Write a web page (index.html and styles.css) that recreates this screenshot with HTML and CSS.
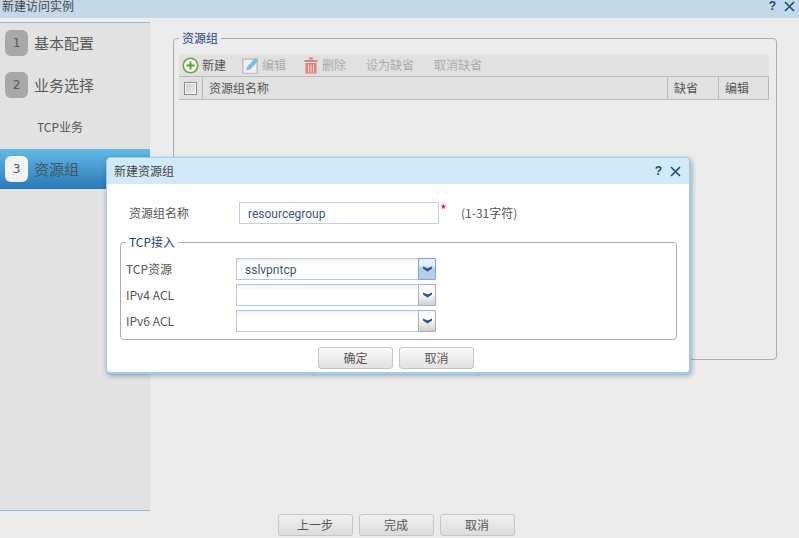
FILE: index.html
```html
<!DOCTYPE html>
<html lang="zh">
<head>
<meta charset="utf-8">
<title>新建访问实例</title>
<link rel="stylesheet" href="styles.css">
</head>
<body>
<div class="titlebar">
  <span class="title-text">新建访问实例</span>
  <span class="tools">
    <span class="help">?</span>
    <svg class="close" width="11" height="11" viewBox="0 0 11 11"><path d="M1 1l9 9M10 1l-9 9"/></svg>
  </span>
</div>
<div class="main">
  <nav class="sidebar">
    <div class="step"><span class="badge">1</span><span>基本配置</span></div>
    <div class="step"><span class="badge">2</span><span>业务选择</span></div>
    <div class="step sub">TCP业务</div>
    <div class="step active"><span class="badge">3</span><span>资源组</span></div>
  </nav>
  <section class="content">
    <fieldset class="group outer">
      <legend>资源组</legend>
      <div class="toolbar">
        <span class="tool on">
          <svg width="17" height="17" viewBox="0 0 17 17"><circle cx="8.500" cy="8.500" r="7.300" fill="#f4f7f0" stroke="#6fa544" stroke-width="1.600"/><path d="M8.500 4.500v8M4.500 8.500h8" stroke="#5f9c38" stroke-width="2" fill="none"/></svg>
          新建
        </span>
        <span class="tool">
          <svg width="17" height="17" viewBox="0 0 17 17"><rect x="0.750" y="2" width="14.500" height="14.500" fill="#f0f0f0" stroke="#bdbdbd" stroke-width="1.500"/><path d="M4 13.500l1-3.500L13 1l3 3-8 8.500z" fill="#7dbce6"/></svg>
          编辑
        </span>
        <span class="tool trash">
          <svg width="14" height="17" viewBox="0 0 14 17"><path d="M0.500 3h13v2h-13zM5 0.500h4v2h-4z" fill="#e08080"/><path d="M1.500 6h11v10.500h-11z" fill="#e08080"/><path d="M4.500 7.500v8M7 7.500v8M9.500 7.500v8" stroke="#f6dada" stroke-width="1"/></svg>
          删除
        </span>
        <span class="tool wide">设为缺省</span>
        <span class="tool wide">取消缺省</span>
      </div>
      <div class="thead">
        <span class="cell check"><span class="checkbox"></span></span>
        <span class="cell">资源组名称</span>
        <span class="cell">缺省</span>
        <span class="cell">编辑</span>
      </div>
    </fieldset>
  </section>
</div>
<div class="footer">
  <button class="btn">上一步</button>
  <button class="btn">完成</button>
  <button class="btn">取消</button>
</div>

<div class="dialog">
  <div class="dialog-head">
    <span>新建资源组</span>
    <span class="tools">
      <span class="help">?</span>
      <svg class="close" width="11" height="11" viewBox="0 0 11 11"><path d="M1 1l9 9M10 1l-9 9"/></svg>
    </span>
  </div>
  <div class="dialog-body">
    <div class="name-row">
      <label class="name-label">资源组名称</label>
      <div class="input">resourcegroup</div>
      <span class="star">*</span>
      <span class="hint">(1-31字符)</span>
    </div>
    <fieldset class="group inner">
      <legend>TCP接入</legend>
      <div class="sel-row">
        <label>TCP资源</label>
        <div class="select focus"><span class="value">sslvpntcp</span><span class="arrow"><svg width="9" height="6" viewBox="0 0 9 6"><path d="M0 0.500L4.500 2.500 9 0.500V2.500L4.500 5.500 0 2.500z"/></svg></span></div>
      </div>
      <div class="sel-row">
        <label>IPv4 ACL</label>
        <div class="select"><span class="value"></span><span class="arrow"><svg width="9" height="6" viewBox="0 0 9 6"><path d="M0 0.500L4.500 2.500 9 0.500V2.500L4.500 5.500 0 2.500z"/></svg></span></div>
      </div>
      <div class="sel-row">
        <label>IPv6 ACL</label>
        <div class="select"><span class="value"></span><span class="arrow"><svg width="9" height="6" viewBox="0 0 9 6"><path d="M0 0.500L4.500 2.500 9 0.500V2.500L4.500 5.500 0 2.500z"/></svg></span></div>
      </div>
    </fieldset>
    <div class="dialog-actions">
      <button class="btn light">确定</button>
      <button class="btn light">取消</button>
    </div>
  </div>
</div>
</body>
</html>
```
FILE: styles.css
```css
* { box-sizing: border-box; }
html, body { height: 100%; }
body {
  margin: 0;
  width: 799px;
  height: 538px;
  overflow: hidden;
  position: relative;
  background: #ececec;
  color: #555;
  font: 12px/16px "Noto Sans CJK SC", "Noto Sans", sans-serif;
  display: flex;
  flex-direction: column;
}
.titlebar {
  height: 18px;
  flex: none;
  background: #c3d9e8;
  display: flex;
  align-items: center;
  justify-content: space-between;
  padding: 0 4px 0 2px;
  overflow: hidden;
  color: #444;
}
.title-text { margin-top: -7px; }
.tools { display: flex; align-items: center; gap: 8px; }
.titlebar .tools { margin-top: -6px; }
.help { font: bold 12px/12px "Liberation Sans", sans-serif; color: #1c4a78; }
.close { display: block; }
.close path { stroke: #1c4a78; stroke-width: 1.6; fill: none; }
.main {
  height: 489px;
  flex: none;
  margin-top: 4px;
  display: flex;
}
.sidebar {
  width: 150px;
  flex: none;
  background: #e2e2e2;
  border-top: 1px solid #8fb4e2;
  border-bottom: 1px solid #8fb4e2;
  display: flex;
  flex-direction: column;
  gap: 2px;
}
.step {
  height: 40px;
  display: flex;
  align-items: center;
  gap: 6px;
  padding-left: 5px;
  font-size: 15px;
  color: #5a5a5a;
}
.step.sub { padding-left: 37px; font-size: 12px; color: #555; }
.badge {
  width: 23px;
  height: 26px;
  border-radius: 6px;
  background: #a8a8a8;
  display: flex;
  align-items: center;
  justify-content: center;
  font: 12px "DejaVu Sans", sans-serif;
  color: #555;
}
.step.active { background: linear-gradient(#62bae6, #2b78b5); color: #3f5568; }
.step.active .badge { background: #f2f2f2; }
.content { flex: 1; padding: 8px 22px 0 23px; }
.group {
  margin: 0;
  border: 1px solid #aaaabf;
  border-radius: 4px;
  min-width: 0;
}
.group legend { padding: 0 3px; color: #24467c; line-height: 16px; }
.outer { height: 330px; padding: 8px 7px 0 5px; }
.toolbar {
  height: 22px;
  background: #e1e1e1;
  display: flex;
  align-items: center;
  padding-left: 3px;
}
.tool {
  display: flex;
  align-items: center;
  gap: 3px;
  margin-right: 16px;
  color: #aaa;
  white-space: nowrap;
}
.tool.on { color: #555; }
.tool.trash { margin-left: 2px; margin-right: 20px; gap: 4px; }
.tool.wide { margin-right: 20px; }
.thead {
  height: 24px;
  display: grid;
  grid-template-columns: 23px 465px 51px 50px;
  background: #e1e1e1;
  border-top: 1px solid #b8b8b8;
  border-bottom: 1px solid #b8b8b8;
  border-right: 1px solid #b8b8b8;
}
.cell {
  display: flex;
  align-items: center;
  padding-left: 6px;
  border-left: 1px solid #b8b8b8;
  color: #555;
}
.cell:first-child { border-left: 0; }
.cell.check { padding-left: 5px; }
.checkbox {
  width: 13px;
  height: 13px;
  border: 1px solid #8a8a8a;
  background: linear-gradient(135deg, #c8c8c8, #f2f2f2);
  box-shadow: inset 0 0 0 1px #f6f6f6;
}
.footer {
  margin-top: 3px;
  display: flex;
  justify-content: center;
  gap: 6px;
  padding-right: 7px;
}
.btn {
  width: 75px;
  height: 22px;
  padding: 0;
  border: 1px solid #c4c4c4;
  border-radius: 3px;
  background: linear-gradient(#f0f0f0, #dcdcdc);
  font: inherit;
  color: #555;
}
.btn.light { background: linear-gradient(#fafafa, #e2e2e2); }
.dialog {
  position: absolute;
  left: 106px;
  top: 157px;
  width: 585px;
  height: 217px;
  background: #fff;
  border: 1px solid #9ccdf0;
  border-right-width: 2px;
  border-bottom-width: 2px;
  border-radius: 5px;
  box-shadow: 1px 2px 5px rgba(0, 0, 0, .3);
  overflow: hidden;
}
.dialog-head {
  height: 26px;
  background: #d2e9fa;
  display: flex;
  align-items: center;
  justify-content: space-between;
  padding: 0 8px 0 7px;
  color: #444;
}
.dialog-body { padding: 18px 12px 0 13px; }
.name-row { height: 22px; display: flex; align-items: center; }
.name-label { width: 119px; padding-left: 9px; }
.input {
  width: 200px;
  height: 22px;
  border: 1px solid #c2d2e6;
  padding-left: 8px;
  font-family: Roboto, sans-serif;
  line-height: 22px;
  color: #3d5472;
}
.star { color: #e8201c; align-self: flex-start; margin-left: 1px; width: 21px; font-size: 15px; line-height: 16px; }
.inner { height: 106px; padding: 8px 0 0 5px; margin-top: 10px; }
.sel-row { display: flex; align-items: center; height: 22px; margin-bottom: 4px; }
.sel-row label { width: 110px; }
.select {
  width: 200px;
  height: 22px;
  display: flex;
  border: 1px solid #b6c8de;
  border-right: 0;
  background: linear-gradient(#f1f1f1, #fff 6px);
}
.value { flex: 1; padding-left: 8px; font-family: Roboto, sans-serif; line-height: 22px; color: #3d5472; }
.arrow {
  width: 18px;
  margin-top: -1px;
  margin-bottom: -1px;
  display: flex;
  justify-content: center;
  padding-top: 7px;
  border: 1px solid #a9b0bf;
  border-radius: 0 2px 2px 0;
  background: linear-gradient(#fafafa 45%, #cfcfcf);
}
.arrow svg { display: block; }
.arrow path { fill: #2f4f8c; }
.focus .arrow { border-color: #7aa6d4; background: linear-gradient(#e6f0fa 30%, #b4cfea 45%); }
.dialog-actions { display: flex; justify-content: center; gap: 6px; margin-top: 7px; padding-right: 5px; }
```
